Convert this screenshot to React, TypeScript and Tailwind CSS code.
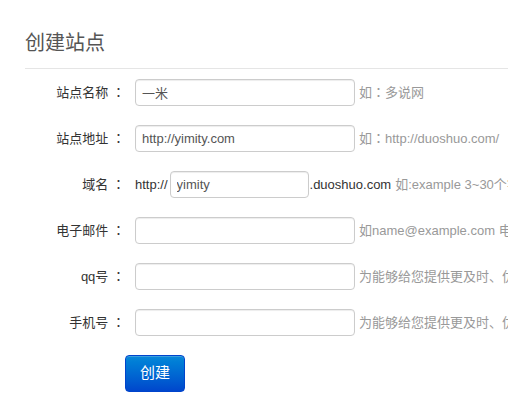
import React from 'react';

const font = { fontFamily: '"Liberation Sans", "Noto Sans CJK SC", sans-serif' };
const colonFont = { fontFamily: '"Noto Sans CJK JP", "Noto Sans CJK SC", sans-serif' };

type FieldProps = {
  label: string;
  value?: string;
  hint: React.ReactNode;
};

const inputCls =
  'h-[27px] border border-[#ccc] rounded-[4px] px-[6px] text-[13px] text-[#555] bg-white outline-none shadow-[inset_0_1px_1px_rgba(0,0,0,0.075)]';

// full-width colon, centred like the original
const Colon = () => <span style={colonFont}>：</span>;

const Label: React.FC<{ text: string }> = ({ text }) => (
  <label className="w-[100px] shrink-0 text-right text-[13px] text-[#333]">
    {text} <Colon />
  </label>
);

const Field: React.FC<FieldProps> = ({ label, value = '', hint }) => (
  <div className="flex items-center h-[27px] whitespace-nowrap">
    <Label text={label} />
    <input readOnly value={value} className={`${inputCls} ml-[10px] w-[220px] shrink-0`} style={font} />
    <span className="ml-[4px] text-[13px] text-[#999]">{hint}</span>
  </div>
);

export default function App() {
  return (
    <div className="min-h-screen w-full bg-white overflow-hidden" style={font}>
      <div className="pl-[25px] pt-[33px]">
        <h2 className="text-[20px] leading-[20px] text-[#555] pb-[15px] border-b border-[#e5e5e5] font-normal">
          创建站点
        </h2>

        <form className="flex flex-col gap-[19px] mt-[10px]">
          <Field label="站点名称" value="一米" hint={<>如<Colon />多说网</>} />
          <Field label="站点地址" value="http://yimity.com" hint={<>如<Colon />http://duoshuo.com/</>} />

          <div className="flex items-center h-[27px] whitespace-nowrap">
            <Label text="域名" />
            <span className="ml-[10px] text-[13px] text-[#333]">http://</span>
            <input readOnly value="yimity" className={`${inputCls} ml-[2px] w-[139px] shrink-0`} style={font} />
            <span className="ml-[1px] text-[13px] text-[#333]">.duoshuo.com</span>
            <span className="ml-[4px] text-[13px] text-[#999]">如:example 3~30个字符，可包含英文字母、数字</span>
          </div>

          <Field label="电子邮件" hint="如name@example.com 电子邮件将用于找回密码" />
          <Field label="qq号" hint="为能够给您提供更及时、优质的服务，请填写qq号" />
          <Field label="手机号" hint="为能够给您提供更及时、优质的服务，请填写手机号" />

          <div className="pl-[100px]">
            <button
              type="button"
              className="w-[60px] h-[37px] rounded-[4px] text-white text-[15px] border border-[#0044cc] bg-gradient-to-b from-[#0a88d8] to-[#0046cc] shadow-[inset_0_1px_0_rgba(255,255,255,0.2)]"
            >
              创建
            </button>
          </div>
        </form>
      </div>
    </div>
  );
}
